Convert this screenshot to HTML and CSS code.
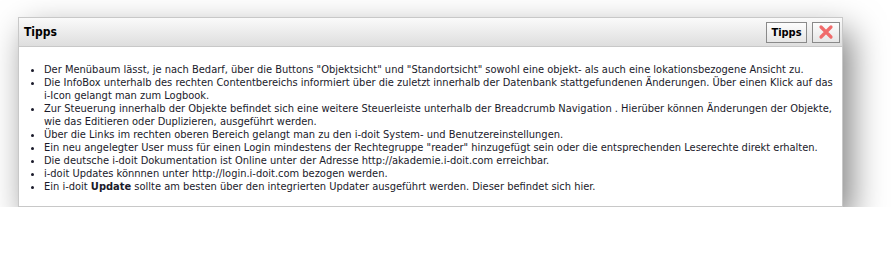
FILE: index.html
```html
<!DOCTYPE html>
<html lang="de">

<head>
    <meta charset="UTF-8">
    <title>Tipps</title>
    <link rel="stylesheet" href="styles.css">
</head>

<body>
<div class="panel">
    <div class="panel-header">
        <span class="panel-title">Tipps</span>
        <div class="panel-buttons">
            <span class="btn btn-text">Tipps</span>
            <span class="btn btn-close">
                <svg width="16" height="16" viewBox="0 0 16 16">
                    <path d="M3 3 L13 13 M13 3 L3 13" stroke="#f06b6b" stroke-width="3.2" stroke-linecap="round"/>
                </svg>
            </span>
        </div>
    </div>
    <ul class="tips">
        <li>Der Menübaum lässt, je nach Bedarf, über die Buttons "Objektsicht" und "Standortsicht" sowohl eine objekt- als auch eine lokationsbezogene Ansicht zu.</li>
        <li>Die InfoBox unterhalb des rechten Contentbereichs informiert über die zuletzt innerhalb der Datenbank stattgefundenen Änderungen. Über einen Klick auf das i-Icon gelangt man zum Logbook.</li>
        <li>Zur Steuerung innerhalb der Objekte befindet sich eine weitere Steuerleiste unterhalb der Breadcrumb Navigation . Hierüber können Änderungen der Objekte, wie das Editieren oder Duplizieren, ausgeführt werden.</li>
        <li>Über die Links im rechten oberen Bereich gelangt man zu den i-doit System- und Benutzereinstellungen.</li>
        <li>Ein neu angelegter User muss für einen Login mindestens der Rechtegruppe "reader" hinzugefügt sein oder die entsprechenden Leserechte direkt erhalten.</li>
        <li>Die deutsche i-doit Dokumentation ist Online unter der Adresse http://akademie.i-doit.com erreichbar.</li>
        <li>i-doit Updates könnnen unter http://login.i-doit.com bezogen werden.</li>
        <li>Ein i-doit <b>Update</b> sollte am besten über den integrierten Updater ausgeführt werden. Dieser befindet sich hier.</li>
    </ul>
</div>
</body>

</html>
```

FILE: styles.css
```css
body {
    margin: 0;
    background-color: #ffffff;
    font-family: "DejaVu Sans Condensed", "DejaVu Sans", sans-serif;
    font-size: 11px;
    color: #1a1a2a;
}

.panel {
    margin: 17px 0 0 18px;
    width: 823px;
    height: 188px;
    border: 1px solid #c8c8c8;
    background-color: #ffffff;
    box-shadow: 8px 14px 32px rgba(0, 0, 0, 0.5);
}

.panel-header {
    display: flex;
    justify-content: space-between;
    align-items: center;
    height: 28px;
    padding: 0 2px 0 5px;
    border-bottom: 1px solid #c8c8c8;
    background: linear-gradient(#fafafa, #dedede);
}

.panel-title {
    font-weight: bold;
    font-size: 12px;
    color: #000;
}

.panel-buttons {
    display: flex;
    gap: 5px;
}

.btn {
    display: flex;
    align-items: center;
    justify-content: center;
    height: 19px;
    border: 1px solid #8a8a8a;
    background: linear-gradient(#fdfdfd, #e6e6e6);
}

.btn-text {
    width: 39px;
    font-weight: bold;
    color: #000;
}

.btn-close {
    width: 26px;
}

.tips {
    margin: 16px 0 0 0;
    padding: 0 4px 0 25px;
    line-height: 13px;
}
```
